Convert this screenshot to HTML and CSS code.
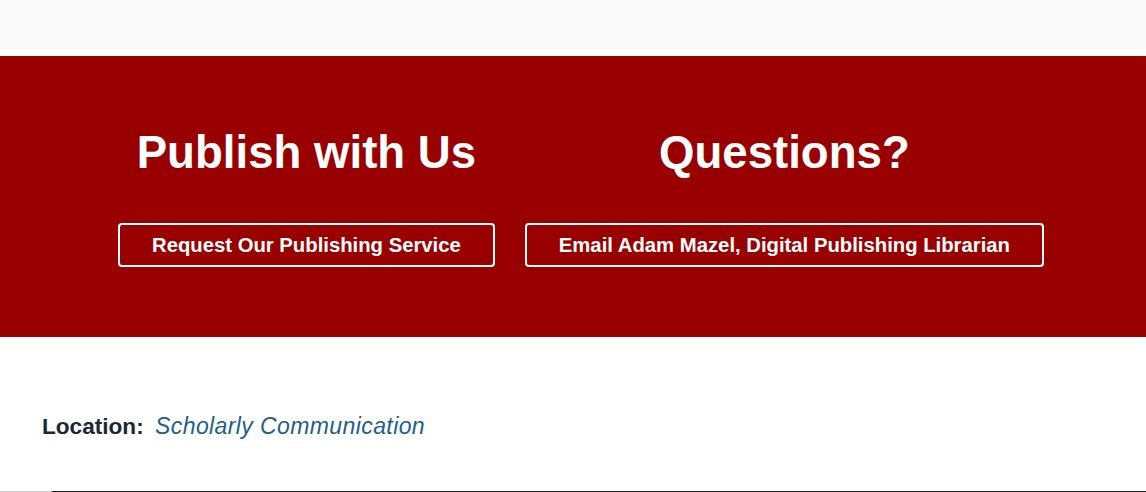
FILE: index.html
```html
<!DOCTYPE html>
<html>
<head>
<meta charset="utf-8">
<link rel="stylesheet" href="styles.css">
</head>
<body>
<div class="topbar"></div>
<div class="gap"></div>
<section class="cta">
  <div class="cta-inner">
    <div class="col">
      <h2>Publish with Us</h2>
      <a class="btn" href="#">Request Our Publishing Service</a>
    </div>
    <div class="col">
      <h2>Questions?</h2>
      <a class="btn" href="#">Email Adam Mazel, Digital Publishing Librarian</a>
    </div>
  </div>
</section>
<section class="meta">
  <p class="location"><span class="label">Location:</span> <a href="#">Scholarly Communication</a></p>
</section>
<div class="rule"><span class="rule-light"></span><span class="rule-dark"></span></div>
</body>
</html>
```
FILE: styles.css
```css
html, body { margin: 0; padding: 0; background: #fff; }
body { font-family: "Liberation Sans", Arial, sans-serif; height: 492px; overflow: hidden; }
.topbar { height: 49px; background: #f8f9fb; }
.gap { height: 7px; background: #fff; }
.cta { background: #990000; height: 281px; box-sizing: border-box; padding-top: 71px; }
.cta-inner { display: flex; gap: 30px; padding-left: 118px; }
.col { display: flex; flex-direction: column; align-items: center; }
.col h2 { margin: 0; color: #fff; font-size: 45.6px; line-height: 52px; font-weight: 700; letter-spacing: 0; }
.btn { margin-top: 44px; display: block; box-sizing: border-box; height: 44px; line-height: 40px; border: 2px solid #fff; border-radius: 4px; color: #fff; text-decoration: none; font-weight: 700; font-size: 20.3px; padding: 0 32px; }
.meta { padding: 74px 0 0 42px; height: 154px; box-sizing: border-box; }
.location { margin: 0; font-size: 23px; line-height: 30px; color: #1d2834; }
.location .label { font-weight: 700; font-size: 22.6px; margin-right: 5px; }
.location a { color: #1f5e8c; font-style: italic; text-decoration: none; letter-spacing: 0.4px; }
.rule { display: flex; height: 1px; }
.rule-light { width: 52px; background: #c8c8c8; }
.rule-dark { flex: 1; background: #222; }
```
